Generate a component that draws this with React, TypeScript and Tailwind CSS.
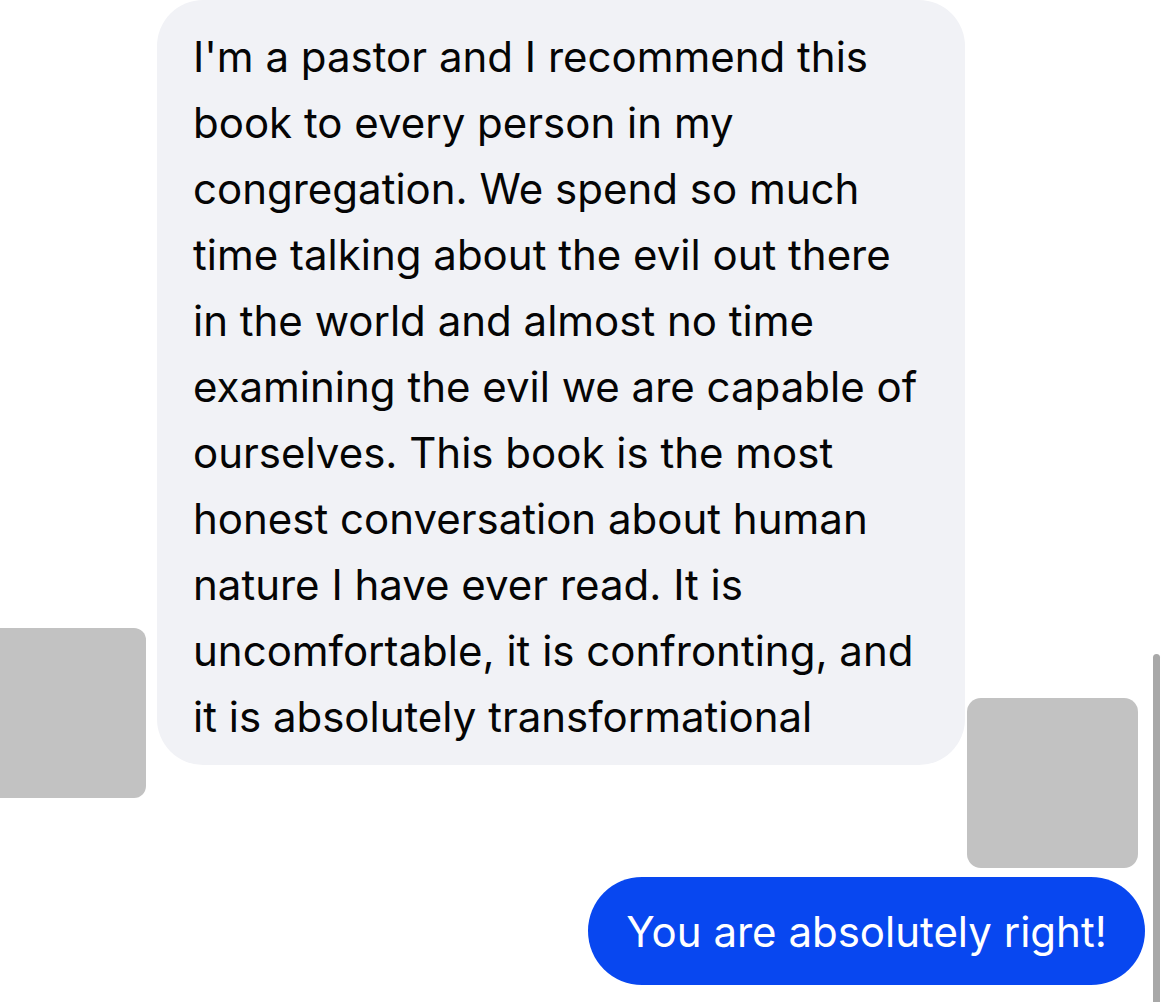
export default function App() {
  const lines = [
    "I'm a pastor and I recommend this",
    "book to every person in my",
    "congregation. We spend so much",
    "time talking about the evil out there",
    "in the world and almost no time",
    "examining the evil we are capable of",
    "ourselves. This book is the most",
    "honest conversation about human",
    "nature I have ever read. It is",
    "uncomfortable, it is confronting, and",
    "it is absolutely transformational",
  ];
  return (
    <div
      className="relative h-[1002px] w-[1169px] overflow-hidden bg-white"
      style={{ fontFamily: "Inter, 'Noto Sans', sans-serif" }}
    >
      {/* incoming message row */}
      <div className="flex items-end">
        <div className="-mb-[33px] h-[170px] w-[146px] shrink-0 rounded-r-[12px] bg-[#c2c2c2]" />
        <div className="ml-[11px] w-[808px] shrink-0 rounded-[46px] bg-[#f1f2f6] pb-[15px] pl-[36px] pt-[24px] text-[42px] leading-[66px] text-[#050505]">
          {lines.map((l) => (
            <div key={l} className="whitespace-nowrap">
              {l}
            </div>
          ))}
        </div>
        <div className="-mb-[103px] ml-[2px] h-[170px] w-[171px] shrink-0 rounded-[14px] bg-[#c2c2c2]" />
      </div>

      {/* outgoing message */}
      <div className="mt-[112px] flex justify-end pr-[24px]">
        <div className="flex h-[108px] w-[557px] items-center justify-center rounded-full bg-[#0847f0] text-[42px] text-white">
          You are absolutely right!
        </div>
      </div>

      {/* scrollbar thumb */}
      <div className="absolute right-[9px] top-[654px] h-[360px] w-[7px] rounded-full bg-[#a8a8a8]" />
    </div>
  );
}
